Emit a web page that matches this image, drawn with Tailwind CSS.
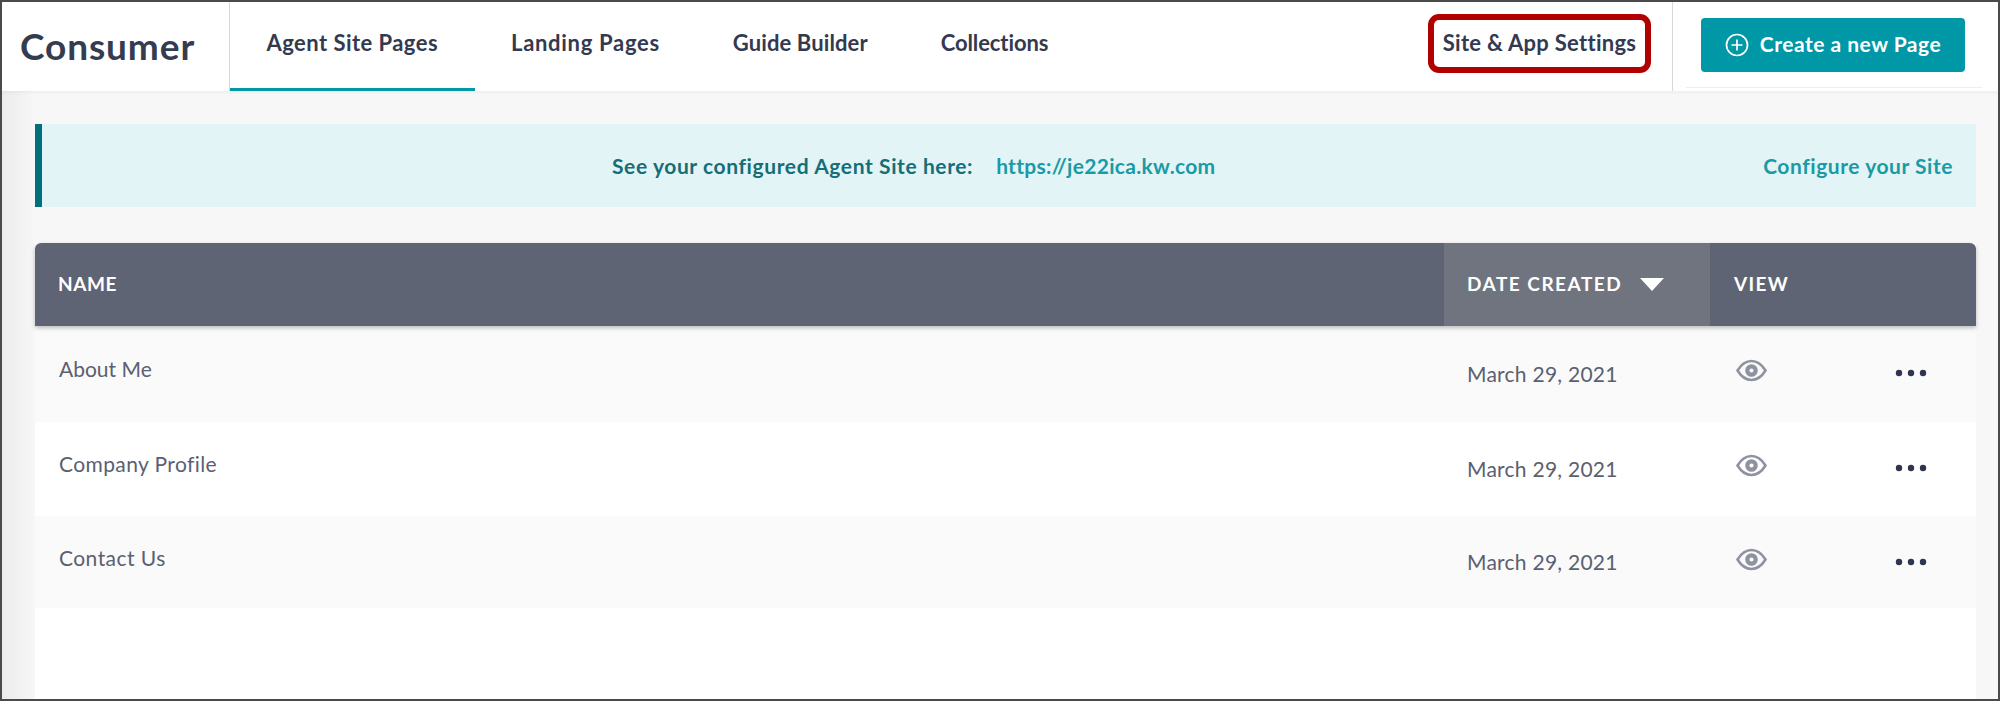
<!DOCTYPE html>
<html><head><meta charset="utf-8"><title>Consumer</title>
<script src="https://cdn.jsdelivr.net/npm/@tailwindcss/browser@4"></script></head>
<body class="font-['Lato','Liberation_Sans',sans-serif]">
<div class="w-[2000px] h-[701px] border-2 border-[#4a4a4a] flex flex-col overflow-hidden text-[#333a4f]">
  <header class="h-[89px] shrink-0 bg-white flex items-stretch">
    <div class="w-[228px] shrink-0 border-r border-[#d5d8dd] pl-[18px] flex items-center pb-[2px]">
      <h1 class="text-[37px] font-bold tracking-[0.9px] text-[#363c4f]">Consumer</h1>
    </div>
    <nav class="flex text-[22px] font-bold">
      <a class="px-[36.5px] flex items-center pb-[6px] border-b-[3px] border-[#0097a7] tracking-[0.45px]">Agent Site Pages</a>
      <a class="px-[36.5px] flex items-center pb-[6px] border-b-[3px] border-transparent tracking-[0.7px]">Landing Pages</a>
      <a class="px-[36.5px] flex items-center pb-[6px] border-b-[3px] border-transparent tracking-[0.1px]">Guide Builder</a>
      <a class="px-[36.5px] flex items-center pb-[6px] border-b-[3px] border-transparent tracking-[-0.1px]">Collections</a>
    </nav>
    <div class="ml-auto flex items-stretch">
      <div class="flex items-center pb-[6px] mr-[21px]">
        <a class="h-[59px] w-[223px] pb-[3px] border-[6px] border-[#b00000] rounded-[11px] flex items-center justify-center text-[22px] font-bold tracking-[0.28px]">Site &amp; App Settings</a>
      </div>
      <div class="border-l border-[#d5d8dd] w-[326px] pl-[13px] pr-[16px]">
        <div class="h-[86px] border-b border-[#eeeeee] pl-[15px] pt-[16px]">
          <button class="w-[264px] h-[54px] pb-[3px] rounded-[4px] bg-[#0097a7] text-white text-[21px] font-bold tracking-[0.5px] flex items-center justify-center gap-[11px]">
            <svg class="w-[24px] h-[24px] mt-[3px]" viewBox="0 0 24 24" fill="none" stroke="currentColor" stroke-width="1.7"><circle cx="12" cy="12" r="10.500"/><path d="M12 6.500v11M6.500 12h11"/></svg>
            Create a new Page
          </button>
        </div>
      </div>
    </div>
  </header>
  <main class="flex-1 min-h-0 pt-[33px] pl-[33px] pr-[22px] bg-[linear-gradient(to_right,#ebebeb,#f7f7f7_33px)] shadow-[inset_0_4px_4px_-3px_rgba(0,0,0,0.06)] flex flex-col">
    <div class="h-[83px] shrink-0 bg-[#e3f4f7] border-l-[7px] border-[#00707a] pr-[23px] pl-[570px] flex items-center text-[21px] font-bold tracking-[0.6px]">
      <span class="text-[#156e78]">See your configured Agent Site here:</span>
      <a class="ml-[23px] text-[#1a9aa5] tracking-[0.3px]">https://je22ica.kw.com</a>
      <a class="ml-auto text-[#1a9aa5] tracking-[0.55px]">Configure your Site</a>
    </div>
    <section class="mt-[36px] flex-1 bg-white flex flex-col">
      <div class="h-[83px] shrink-0 rounded-t-[6px] overflow-hidden bg-[#5f6475] text-white text-[19px] font-bold grid grid-cols-[1409px_266px_1fr] shadow-[0_2px_4px_rgba(0,0,0,0.25)] relative">
        <div class="pl-[23px] flex items-center tracking-[0.6px]">NAME</div>
        <div class="pl-[23px] flex items-center bg-[#70747f] tracking-[1.5px]">DATE CREATED
          <svg class="ml-[18px] w-[24px] h-[13px]" viewBox="0 0 24 13" fill="#fff"><path d="M0 0h24L12 13z"/></svg>
        </div>
        <div class="pl-[24px] flex items-center tracking-[1.3px]">VIEW</div>
      </div>
      <div class="h-[96px] bg-[#fafafa] grid grid-cols-[1409px_266px_1fr] text-[21px] text-[#5a6070] tracking-[0.25px]">
        <div class="pl-[24px] pb-[10px] flex items-center tracking-normal">About Me</div>
        <div class="pl-[23px] flex items-center">March 29, 2021</div>
        <div class="pl-[26px] pr-[49px] flex items-center justify-between">
          <svg class="w-[31px] h-[23px] mb-[7px]" viewBox="0 0 31 23" fill="none" stroke="#8f93a0" stroke-width="2.600"><path d="M1.500 11.500C5.500 5 10 2 15.500 2s10 3 14 9.500c-4 6.500-8.500 9.500-14 9.500S5.500 18 1.500 11.500z"/><circle cx="15.500" cy="11.500" r="4.200" stroke-width="4.200"/></svg>
          <svg class="w-[32px] h-[8px] mb-[2px]" viewBox="0 0 32 8" fill="#2f3550"><circle cx="4" cy="4" r="3.200"/><circle cx="16" cy="4" r="3.200"/><circle cx="28" cy="4" r="3.200"/></svg>
        </div>
      </div>
      <div class="h-[94px] bg-white grid grid-cols-[1409px_266px_1fr] text-[21px] text-[#5a6070] tracking-[0.25px]">
        <div class="pl-[24px] pb-[10px] flex items-center tracking-[0.4px]">Company Profile</div>
        <div class="pl-[23px] flex items-center">March 29, 2021</div>
        <div class="pl-[26px] pr-[49px] flex items-center justify-between">
          <svg class="w-[31px] h-[23px] mb-[7px]" viewBox="0 0 31 23" fill="none" stroke="#8f93a0" stroke-width="2.600"><path d="M1.500 11.500C5.500 5 10 2 15.500 2s10 3 14 9.500c-4 6.500-8.500 9.500-14 9.500S5.500 18 1.500 11.500z"/><circle cx="15.500" cy="11.500" r="4.200" stroke-width="4.200"/></svg>
          <svg class="w-[32px] h-[8px] mb-[2px]" viewBox="0 0 32 8" fill="#2f3550"><circle cx="4" cy="4" r="3.200"/><circle cx="16" cy="4" r="3.200"/><circle cx="28" cy="4" r="3.200"/></svg>
        </div>
      </div>
      <div class="h-[92px] bg-[#fafafa] grid grid-cols-[1409px_266px_1fr] text-[21px] text-[#5a6070] tracking-[0.25px]">
        <div class="pl-[24px] pb-[8px] flex items-center tracking-[0.45px]">Contact Us</div>
        <div class="pl-[23px] flex items-center">March 29, 2021</div>
        <div class="pl-[26px] pr-[49px] flex items-center justify-between">
          <svg class="w-[31px] h-[23px] mb-[5px]" viewBox="0 0 31 23" fill="none" stroke="#8f93a0" stroke-width="2.600"><path d="M1.500 11.500C5.500 5 10 2 15.500 2s10 3 14 9.500c-4 6.500-8.500 9.500-14 9.500S5.500 18 1.500 11.500z"/><circle cx="15.500" cy="11.500" r="4.200" stroke-width="4.200"/></svg>
          <svg class="w-[32px] h-[8px]" viewBox="0 0 32 8" fill="#2f3550"><circle cx="4" cy="4" r="3.200"/><circle cx="16" cy="4" r="3.200"/><circle cx="28" cy="4" r="3.200"/></svg>
        </div>
      </div>
    </section>
  </main>
</div>
</body></html>
